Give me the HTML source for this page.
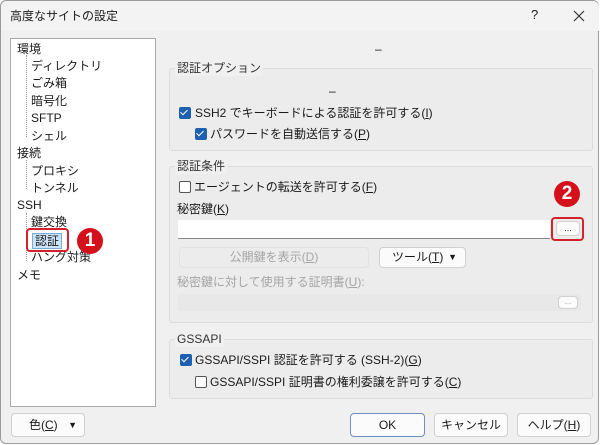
<!DOCTYPE html><html><head><meta charset="utf-8"><style>
*{box-sizing:border-box;margin:0;padding:0}
body{width:600px;height:445px;background:#fff;font-family:"Liberation Sans","Noto Sans CJK JP",sans-serif;font-size:12px;color:#1a1a1a;position:relative;overflow:hidden}
.win{position:absolute;left:0;top:0;width:599px;height:444px;background:#f0f0f0;border:1px solid #9a9a9a;border-radius:6px}
.a{position:absolute;white-space:nowrap;line-height:16px}
.grp{position:absolute;border:1px solid #dcdcdc;border-radius:3px;background:#ececec}
.lab{position:absolute;background:#f0f0f0;padding:0 2px;color:#333;line-height:16px}
.cb{position:absolute;width:12px;height:12px;border-radius:2px}
.on{background:#1d5fb0}
.on:after{content:"";position:absolute;left:3px;top:1px;width:3px;height:6px;border:solid #fff;border-width:0 1.5px 1.5px 0;transform:rotate(45deg)}
.off{border:1px solid #555;background:#fff}
.btn{position:absolute;background:#fbfbfb;border:1px solid #d0d0d0;border-radius:4px;text-align:center}
.dis{color:#a5a5a5}
.red{position:absolute;border:2px solid #d4222a;border-radius:4px}
.circ{position:absolute;width:26px;height:26px;border-radius:50%;background:#d4111b;color:#fff;font-weight:bold;font-size:19px;text-align:center;line-height:26px}
.tree div{position:absolute;left:6px;line-height:16px;white-space:nowrap}
.tree .c{left:20px}
</style></head><body><div class="win">
<div class="a" style="left:0;top:0;width:598px;height:30px;background:#f3f3f3;border-radius:6px 6px 0 0"></div>
<div class="a" style="left:9px;top:7px;font-size:12px">高度なサイトの設定</div>
<div class="a" style="left:530px;top:6px;font-size:13px">?</div>
<svg class="a" style="left:572px;top:9px" width="12" height="12"><path d="M1 1L11 11M11 1L1 11" stroke="#333" stroke-width="1.2"/></svg>

<div class="tree" style="position:absolute;left:9px;top:37px;width:146px;height:369px;background:#fff;border:1px solid #aaa">
<div style="position:absolute;left:15px;top:16px;width:1px;height:82px;border-left:1px dotted #999"></div>
<div style="position:absolute;left:15px;top:121px;width:1px;height:29px;border-left:1px dotted #999"></div>
<div style="position:absolute;left:15px;top:174px;width:1px;height:48px;border-left:1px dotted #999"></div>
<div style="top:2px">環境</div>
<div class="c" style="top:19px">ディレクトリ</div>
<div class="c" style="top:36px">ごみ箱</div>
<div class="c" style="top:54px">暗号化</div>
<div class="c" style="top:71px">SFTP</div>
<div class="c" style="top:89px">シェル</div>
<div style="top:106px">接続</div>
<div class="c" style="top:124px">プロキシ</div>
<div class="c" style="top:141px">トンネル</div>
<div style="top:158px">SSH</div>
<div class="c" style="top:175px">鍵交換</div>
<div class="c" style="top:210px">ハング対策</div>
<div style="top:228px">メモ</div>
<div style="left:21px;top:194px;width:30px;height:16px;background:#cce4f7;border:1px solid #7aaad8;padding-left:2px;line-height:14px">認証</div>
</div>
<div class="red" style="left:25px;top:227px;width:43px;height:24px"></div>
<div class="circ" style="left:76px;top:227px">1</div>

<div class="a" style="left:374px;top:40px">–</div>
<div class="grp" style="left:168px;top:67px;width:424px;height:83px"></div>
<div class="lab" style="left:174px;top:59px">認証オプション</div>
<div class="a" style="left:328px;top:82px">–</div>
<div class="cb on" style="left:178px;top:106px"></div>
<div class="a" style="left:194px;top:104px">SSH2 でキーボードによる認証を許可する(<u>I</u>)</div>
<div class="cb on" style="left:194px;top:127px"></div>
<div class="a" style="left:209px;top:125px">パスワードを自動送信する(<u>P</u>)</div>

<div class="grp" style="left:168px;top:165px;width:424px;height:157px"></div>
<div class="lab" style="left:174px;top:157px">認証条件</div>
<div class="cb off" style="left:178px;top:180px"></div>
<div class="a" style="left:193px;top:178px">エージェントの転送を許可する(<u>F</u>)</div>
<div class="a" style="left:176px;top:200px">秘密鍵(<u>K</u>)</div>
<div class="a" style="left:177px;top:219px;width:372px;height:19px;background:#fff;border-bottom:1px solid #888"></div>
<div class="btn" style="left:555px;top:220px;width:24px;height:15px;font-size:9px;line-height:12px">...</div>
<div class="red" style="left:550px;top:216px;width:33px;height:24px"></div>
<div class="circ" style="left:553px;top:180px">2</div>
<div class="btn dis" style="left:178px;top:246px;width:190px;height:21px;line-height:19px;background:#ececec;border-color:#e2e2e2">公開鍵を表示(<u>D</u>)</div>
<div class="btn" style="left:378px;top:246px;width:87px;height:21px;line-height:19px;text-align:left;padding-left:12px">ツール(<u>T</u>)<span style="position:absolute;right:8px;top:0;font-size:9px">▼</span></div>
<div class="a dis" style="left:176px;top:273px">秘密鍵に対して使用する証明書(<u>U</u>):</div>
<div class="a" style="left:177px;top:293px;width:403px;height:17px;background:#e8e8e8"></div>
<div class="btn dis" style="left:557px;top:295px;width:20px;height:13px;font-size:8px;line-height:9px">...</div>

<div class="grp" style="left:168px;top:338px;width:424px;height:60px"></div>
<div class="lab" style="left:174px;top:330px">GSSAPI</div>
<div class="cb on" style="left:179px;top:353px"></div>
<div class="a" style="left:194px;top:351px">GSSAPI/SSPI 認証を許可する (SSH-2)(<u>G</u>)</div>
<div class="cb off" style="left:194px;top:375px"></div>
<div class="a" style="left:209px;top:373px">GSSAPI/SSPI 証明書の権利委譲を許可する(<u>C</u>)</div>

<div class="btn" style="left:10px;top:412px;width:74px;height:24px;line-height:22px;text-align:left;padding-left:17px">色(<u>C</u>)<span style="position:absolute;right:7px;top:0;font-size:9px">▼</span></div>
<div class="btn" style="left:349px;top:412px;width:75px;height:24px;line-height:22px;border-color:#6d8fb8">OK</div>
<div class="btn" style="left:433px;top:412px;width:74px;height:24px;line-height:22px">キャンセル</div>
<div class="btn" style="left:516px;top:412px;width:74px;height:24px;line-height:22px">ヘルプ(<u>H</u>)</div>
</div></body></html>
